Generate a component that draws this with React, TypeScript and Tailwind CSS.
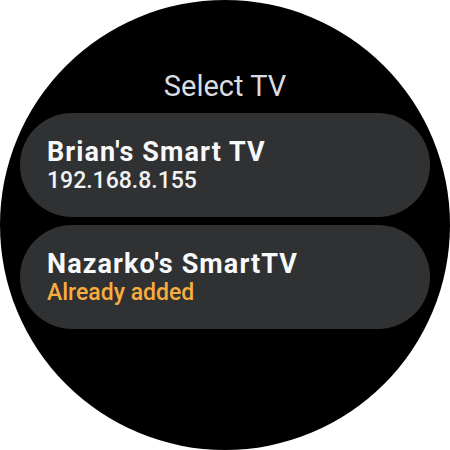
export default function App() {
  const devices = [
    { name: "Brian's Smart TV", sub: "192.168.8.155", added: false },
    { name: "Nazarko's SmartTV", sub: "Already added", added: true },
  ];
  return (
    <div className="w-[450px] h-[450px] bg-white" style={{ fontFamily: "Roboto, sans-serif" }}>
      <div className="w-[450px] h-[450px] rounded-full bg-black overflow-hidden flex flex-col items-center pt-[69px]">
        <div className="h-[34px] text-[29px] leading-[34px] text-[#dadce0]">Select TV</div>
        <div className="mt-[10px] flex flex-col gap-2">
          {devices.map((d) => (
            <div key={d.name} className="w-[410px] h-[104px] rounded-full bg-[#303133] flex flex-col justify-center pl-[27px]">
              <div className="text-[27px] leading-[32px] font-bold tracking-[1.1px] text-[#f8f9fa]">{d.name}</div>
              <div className={`text-[23px] leading-[26px] font-medium ${d.added ? "text-[#f8ad3e]" : "text-[#f1f3f4]"}`}>{d.sub}</div>
            </div>
          ))}
        </div>
      </div>
    </div>
  );
}
